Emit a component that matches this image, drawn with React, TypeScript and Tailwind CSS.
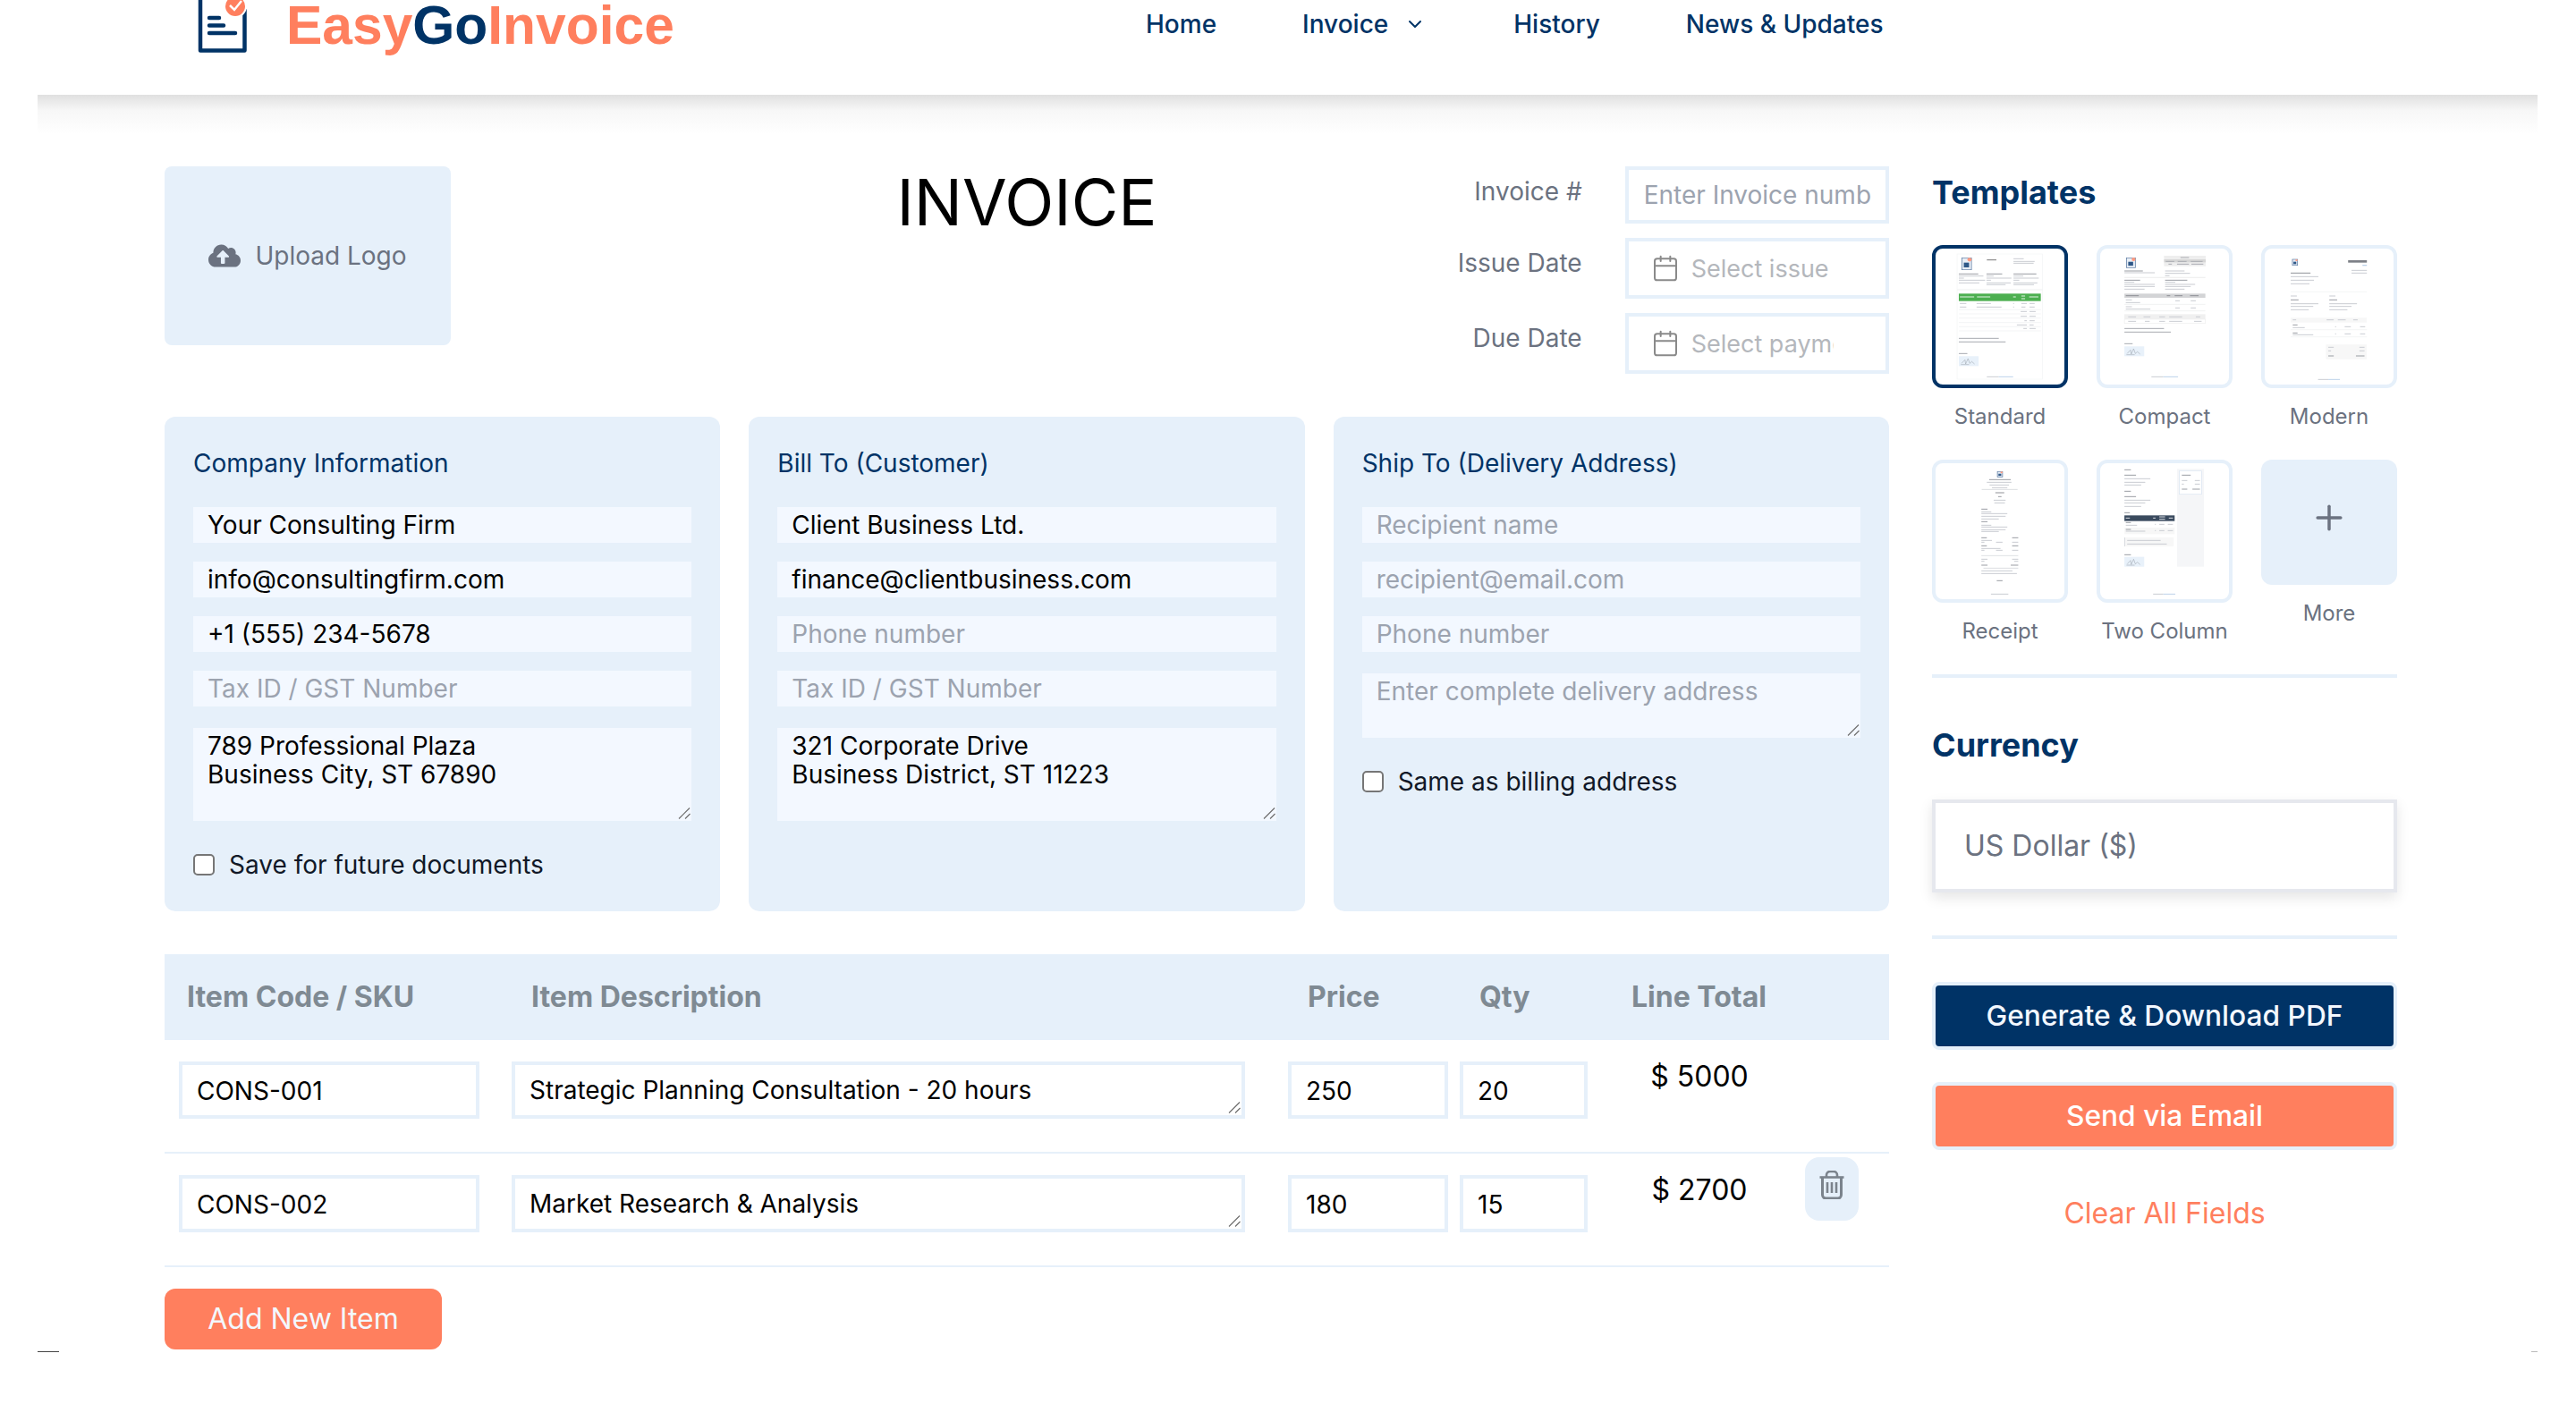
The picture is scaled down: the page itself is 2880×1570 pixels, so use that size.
import { Calendar, ChevronDown, Plus } from 'lucide-react';
import { FaCloudUploadAlt } from 'react-icons/fa';

// [x1, x2, y, colour?] in the thumbnail's own coordinates
type Bar = [number, number, number, string?];

function Bars({ items, color = '#c9ccd2' }: { items: Bar[]; color?: string }) {
  return (
    <>
      {items.map(([a, b, y, c], i) => (
        <rect key={i} x={a} y={y - 1.5} width={b - a} height={3} fill={c || color} />
      ))}
    </>
  );
}

function Signature({ x, y }: { x: number; y: number }) {
  return (
    <g>
      <rect x={x} y={y} width={58} height={33} fill="#e8f1fa" />
      <path
        d={`M${x + 8} ${y + 24} l10 -12 l2 14 l7 -18 l5 16 l6 -6 l8 8 M${x + 6} ${y + 28} h24`}
        fill="none"
        stroke="#9aa1ab"
        strokeWidth={1.5}
      />
    </g>
  );
}

function MiniLogo({ x, y, w, h }: { x: number; y: number; w: number; h: number }) {
  return (
    <g>
      <rect x={x} y={y} width={w} height={h} fill="#e8eef6" stroke="#5d7ca3" strokeWidth={2} />
      <rect x={x + w * 0.2} y={y + h * 0.4} width={w * 0.55} height={h * 0.4} fill="#2f5888" />
      <circle cx={x + w * 0.8} cy={y + h * 0.15} r={w * 0.22} fill="#ff9a80" />
    </g>
  );
}

const stdLines: Bar[] = [
  [265, 293, 92, '#777'], [343, 373, 88], [343, 405, 97], [343, 402, 103],
  [183, 240, 139, '#9a9da3'], [183, 255, 146], [183, 198, 153], [183, 260, 160], [183, 243, 169],
  [264, 310, 139, '#9a9da3'], [264, 285, 146], [264, 337, 153], [264, 277, 160], [264, 335, 169], [264, 320, 175],
  [343, 410, 139, '#9a9da3'], [343, 372, 146], [343, 417, 153], [343, 360, 160], [343, 413, 169], [343, 403, 175],
  [186, 205, 238], [235, 277, 238], [342, 345, 238], [366, 382, 238], [390, 405, 238],
  [186, 205, 250], [235, 308, 250], [342, 345, 250], [366, 378, 250], [390, 405, 250],
  [364, 382, 265], [390, 408, 265], [364, 382, 281], [390, 408, 281], [375, 382, 296], [390, 405, 296],
  [353, 382, 310], [390, 402, 310], [372, 382, 322], [390, 408, 322],
  [183, 300, 355, '#a8abb0'], [183, 320, 367, '#a8abb0'], [183, 208, 406, '#a8abb0'], [265, 300, 484], [300, 342, 484, '#bcd2ea'],
];

const compactLines: Bar[] = [
  [666, 720, 129, '#9a9da3'], [666, 755, 135], [785, 842, 129], [785, 858, 137], [785, 798, 145],
  [666, 712, 160, '#9a9da3'], [666, 695, 167], [666, 755, 174], [666, 755, 181], [666, 725, 190],
  [785, 850, 160, '#9a9da3'], [785, 815, 167], [785, 873, 174], [785, 860, 181], [785, 842, 190],
  [670, 688, 226], [670, 712, 235], [815, 828, 229], [860, 875, 229], [670, 688, 249], [670, 742, 257], [815, 828, 253], [860, 875, 253],
  [677, 700, 283], [722, 742, 283], [768, 785, 283], [797, 835, 283], [875, 888, 283],
  [677, 700, 298], [726, 740, 298], [768, 785, 298], [797, 835, 298], [870, 892, 298],
  [666, 782, 322, '#a8abb0'], [666, 802, 334, '#a8abb0'], [666, 690, 373, '#a8abb0'], [745, 780, 484], [780, 823, 484, '#bcd2ea'],
];

const modernLines: Bar[] = [
  [1330, 1375, 127], [1330, 1375, 136], [1152, 1210, 136, '#8f9298'], [1152, 1233, 148], [1152, 1220, 160], [1152, 1207, 172],
  [1152, 1170, 213], [1265, 1283, 213], [1152, 1175, 226, '#9a9da3'], [1265, 1288, 226, '#9a9da3'],
  [1152, 1233, 239], [1265, 1346, 239], [1152, 1218, 248], [1265, 1330, 248], [1152, 1205, 259], [1265, 1318, 259],
  [1158, 1168, 293], [1257, 1278, 293], [1290, 1313, 293], [1335, 1348, 293],
  [1158, 1172, 310, '#9a9da3'], [1158, 1193, 319], [1282, 1285, 316], [1310, 1328, 316], [1355, 1370, 316],
  [1158, 1172, 337, '#9a9da3'], [1158, 1218, 343], [1282, 1285, 340], [1310, 1328, 340], [1355, 1370, 340],
  [1262, 1278, 385], [1353, 1368, 385], [1262, 1270, 397], [1353, 1368, 397], [1262, 1278, 414, '#9a9da3'], [1343, 1368, 414, '#9a9da3'],
  [1232, 1262, 493], [1262, 1296, 493, '#bcd2ea'],
];

const receiptLines: Bar[] = [
  [272, 335, 829, '#9a9da3'], [265, 337, 838], [273, 330, 847], [280, 325, 856], [250, 355, 862, '#dcdee2'], [290, 316, 873, '#8f9298'],
  [298, 308, 886, '#9a9da3'], [285, 320, 898], [287, 318, 907],
  [249, 267, 928, '#9a9da3'], [249, 278, 937], [249, 325, 943], [249, 320, 952], [249, 300, 961], [249, 267, 970, '#9a9da3'],
  [249, 278, 982], [249, 325, 988], [249, 320, 997], [249, 300, 1003],
  [249, 265, 1024, '#9a9da3'], [339, 357, 1024, '#9a9da3'], [249, 280, 1033], [249, 258, 1039], [292, 311, 1039], [339, 357, 1039],
  [249, 265, 1051, '#9a9da3'], [339, 357, 1051, '#9a9da3'], [249, 305, 1060], [249, 258, 1066], [292, 311, 1066], [339, 357, 1066],
  [249, 357, 1084, '#dfe1e4'], [249, 267, 1096], [339, 357, 1096], [249, 258, 1103], [345, 357, 1103],
  [249, 267, 1116, '#9a9da3'], [335, 357, 1116, '#9a9da3'], [255, 357, 1126, '#dcdee2'], [249, 340, 1135], [249, 353, 1144],
  [294, 311, 1168, '#9a9da3'], [277, 328, 1213],
];

const twoColLines: Bar[] = [
  [666, 685, 796, '#9a9da3'], [666, 700, 814, '#9a9da3'], [666, 742, 826], [666, 727, 838], [666, 715, 847],
  [666, 685, 868, '#9a9da3'], [666, 700, 886, '#9a9da3'], [666, 742, 898], [666, 727, 907], [666, 715, 919], [666, 682, 940, '#9a9da3'],
  [834, 860, 814, '#9a9da3'], [834, 850, 832], [872, 887, 832], [834, 840, 844], [872, 887, 844], [834, 850, 861, '#9a9da3'], [865, 887, 861, '#9a9da3'],
  [670, 685, 973, '#9a9da3'], [670, 703, 982], [755, 758, 979], [768, 783, 979], [793, 808, 979],
  [670, 685, 996, '#9a9da3'], [670, 727, 1002], [755, 758, 1000], [768, 783, 1000], [793, 808, 1000],
  [674, 772, 1033], [674, 790, 1045], [666, 685, 1081, '#9a9da3'], [750, 780, 1213], [780, 815, 1213, '#bcd2ea'],
];

function StandardThumb() {
  return (
    <svg viewBox="115 54 377 456" preserveAspectRatio="none" className="h-full w-full">
      <rect x={178} y={72} width={250} height={420} fill="none" stroke="#f4f5f6" strokeWidth={2} />
      <line x1={178} x2={428} y1={192} y2={192} stroke="#f0f1f2" strokeWidth={3} />
      <MiniLogo x={192} y={85} w={28} h={40} />
      <rect x={183} y={205} width={240} height={25} fill="#4caf50" />
      <Bars items={[[186, 228, 216], [236, 275, 216], [342, 350, 216], [366, 377, 213], [366, 377, 222], [389, 416, 216]]} color="#e4f3e5" />
      {[259, 273, 287, 302, 316, 330].map((y) => (
        <line key={y} x1={183} x2={423} y1={y} y2={y} stroke="#eef0f1" strokeWidth={2} />
      ))}
      <Bars items={stdLines} />
      <Signature x={183} y={415} />
    </svg>
  );
}

function CompactThumb() {
  return (
    <svg viewBox="595 54 377 456" preserveAspectRatio="none" className="h-full w-full">
      <MiniLogo x={672} y={85} w={26} h={33} />
      <rect x={782} y={78} width={122} height={35} fill="#eeeeee" />
      <rect x={782} y={90} width={122} height={10} fill="#d6d6d6" />
      <Bars items={[[830, 855, 84], [787, 812, 97], [822, 848, 97], [860, 895, 97], [795, 805, 106], [820, 855, 106], [862, 897, 106]]} color="#a9acb2" />
      <line x1={666} x2={903} y1={151} y2={151} stroke="#eceded" strokeWidth={3} />
      <rect x={666} y={205} width={237} height={14} fill="#d3d4d6" />
      <Bars items={[[670, 708, 212], [790, 800, 212], [813, 836, 212], [858, 883, 212]]} color="#8c8f95" />
      <line x1={666} x2={903} y1={241} y2={241} stroke="#eceded" strokeWidth={2} />
      <line x1={666} x2={903} y1={263} y2={263} stroke="#eceded" strokeWidth={2} />
      <rect x={666} y={274} width={237} height={17} fill="#f0f0f0" />
      <rect x={666} y={291} width={237} height={14} fill="none" stroke="#efefef" strokeWidth={2} />
      <Bars items={compactLines} />
      <Signature x={666} y={382} />
    </svg>
  );
}

function ModernThumb() {
  return (
    <svg viewBox="1076 54 377 456" preserveAspectRatio="none" className="h-full w-full">
      <MiniLogo x={1157} y={90} w={15} h={20} />
      <rect x={1320} y={93} width={55} height={8} fill="#7d8087" />
      <rect x={1362} y={108} width={13} height={4} fill="#bcd2ea" />
      <line x1={1152} x2={1375} y1={199} y2={199} stroke="#f0f1f2" strokeWidth={2} />
      <rect x={1152} y={286} width={223} height={16} fill="#f7f7f7" />
      <line x1={1152} x2={1375} y1={326} y2={326} stroke="#f0f1f2" strokeWidth={2} />
      <line x1={1152} x2={1375} y1={350} y2={350} stroke="#f0f1f2" strokeWidth={2} />
      <rect x={1255} y={376} width={120} height={49} fill="#f7f7f7" />
      <Bars items={modernLines} />
    </svg>
  );
}

function ReceiptThumb() {
  return (
    <svg viewBox="115 774 377 456" preserveAspectRatio="none" className="h-full w-full">
      <MiniLogo x={296} y={802} w={15} h={18} />
      <Bars items={receiptLines} />
    </svg>
  );
}

function TwoColumnThumb() {
  return (
    <svg viewBox="595 774 377 456" preserveAspectRatio="none" className="h-full w-full">
      <rect x={820} y={793} width={79} height={328} fill="#f5f6f8" />
      <rect x={827} y={800} width={65} height={78} fill="#ffffff" stroke="#dbe6f2" strokeWidth={2} />
      <rect x={666} y={949} width={147} height={19} fill="#3a4a5e" />
      <Bars items={[[670, 682, 958], [750, 757, 958], [768, 785, 954], [768, 785, 962], [796, 808, 958]]} color="#d8dce2" />
      <rect x={666} y={990} width={147} height={22} fill="#f7f7f7" />
      <rect x={666} y={1023} width={144} height={30} fill="#f7f7f7" />
      <rect x={666} y={1023} width={2} height={30} fill="#cfd3d8" />
      <Bars items={twoColLines} />
      <Signature x={666} y={1088} />
    </svg>
  );
}

function Grip({ className }: { className: string }) {
  return (
    <svg viewBox="0 0 14 14" className={`pointer-events-none absolute h-[14px] w-[14px] ${className}`}>
      <path d="M1 13.5 13 1.5M8 13.5 13.5 8" stroke="#6f6f6f" strokeWidth={1.2} fill="none" />
    </svg>
  );
}

function Trash() {
  return (
    <svg viewBox="0 0 28 32" className="h-[32px] w-[28px]" fill="none" stroke="#7b838c" strokeWidth={2.6}>
      <path d="M0.5 7.5H27.5" />
      <path d="M8 7V5a4 4 0 0 1 4-4h4a4 4 0 0 1 4 4v2" />
      <path d="M3.5 7.5V27a4 4 0 0 0 4 4h13a4 4 0 0 0 4-4V7.5" strokeWidth={3} />
      <path d="M9 13V25M14 13V25M19 13V25" />
    </svg>
  );
}

const cardInput =
  'block h-[40px] w-full bg-[#f3f8ff] px-[16px] text-[28px] text-black outline-none placeholder:text-[#9ca3af]';
const cardArea =
  'block w-full resize-none bg-[#f3f8ff] px-[16px] pt-[4px] text-[28px] leading-[32px] text-black outline-none placeholder:text-[#9ca3af]';
const cellInput =
  'block h-[64px] shrink-0 border-4 border-[#e6f0fa] bg-white pr-[16px] pl-[16px] text-[28px] text-black outline-none';

function AddressCard({
  title,
  values,
  placeholders,
  area,
  areaClass,
  check,
}: {
  title: string;
  values: string[];
  placeholders: string[];
  area?: string;
  areaClass: string;
  check?: string;
}) {
  return (
    <div className="h-[553px] rounded-[12px] bg-[#e6f0fa] px-8 pt-[35px]">
      <div className="mb-[32px] text-[28px] leading-[34px] text-[#003366]">{title}</div>
      <div className="flex flex-col gap-[21px]">
        {placeholders.map((p, i) => (
          <input key={p} className={cardInput} placeholder={p} defaultValue={values[i]} />
        ))}
      </div>
      <div className="relative mt-[24px]">
        <textarea className={`${cardArea} ${areaClass}`} defaultValue={area} placeholder="Enter complete delivery address" />
        <Grip className="right-[1px] bottom-[2px]" />
      </div>
      {check && (
        <label className="mt-[37px] flex items-center gap-[16px] text-[28px] leading-[24px] text-[#111827]">
          <input type="checkbox" className="h-6 w-6 appearance-none rounded-[5px] border-2 border-[#767676] bg-white" />
          {check}
        </label>
      )}
    </div>
  );
}

function ItemRow({ code, desc, price, qty, total, trash }: { code: string; desc: string; price: string; qty: string; total: string; trash?: boolean }) {
  return (
    <div className="flex h-[127px] items-start border-b-2 border-[#e6f0fa] pt-[24px] pl-[16px]">
      <input className={`${cellInput} w-[336px] pt-[2px]`} defaultValue={code} />
      <div className="relative ml-[36px] w-[820px] shrink-0">
        <textarea className={`${cellInput} w-full resize-none pt-[12px] leading-[33px]`} defaultValue={desc} />
        <Grip className="right-[5px] bottom-[6px]" />
      </div>
      <input className={`${cellInput} ml-[48px] w-[179px] pt-[2px]`} defaultValue={price} />
      <input className={`${cellInput} ml-[13px] w-[143px] pt-[2px]`} defaultValue={qty} />
      <div className="ml-[15px] w-[220px] shrink-0 text-center text-[32px] leading-[34px] text-black">{total}</div>
      {trash && (
        <button className="ml-[8px] -mt-[20px] flex h-[71px] w-[60px] shrink-0 items-start justify-center rounded-[16px] bg-[#e6f0fa] pt-[15px]">
          <Trash />
        </button>
      )}
    </div>
  );
}

function Thumb({ label, active, children }: { label: string; active?: boolean; children: React.ReactNode }) {
  return (
    <div>
      <div className={`h-[160px] overflow-hidden rounded-[12px] border-4 bg-white ${active ? 'border-[#003366]' : 'border-[#e6f0fa]'}`}>
        {children}
      </div>
      <div className="mt-[16px] text-center text-[24px] leading-[32px] whitespace-nowrap text-[#6b7280]">{label}</div>
    </div>
  );
}

export default function App() {
  return (
    <div className="relative min-h-screen overflow-hidden bg-white font-[Inter,sans-serif]">
      <header className="flex h-[106px] items-start overflow-hidden bg-white pl-[221px]">
        <svg viewBox="0 0 56 60" className="h-[60px] w-[56px] shrink-0">
          <path d="M3 -4V56.5H52.5V10" fill="none" stroke="#003366" strokeWidth={4.5} strokeLinejoin="round" />
          <path d="M13 20H24M13 28.5H29M13 37H42" stroke="#003366" strokeWidth={4.5} strokeLinecap="round" />
          <circle cx={42} cy={7} r={13} fill="#ffffff" />
          <circle cx={42} cy={7} r={11} fill="#ff7f5e" />
          <path d="M36 6l5 5 8-10" fill="none" stroke="#ffffff" strokeWidth={2.5} />
        </svg>
        <div className="ml-[43px] -mt-[6px] w-[437px] shrink-0 whitespace-nowrap font-['Liberation_Sans',sans-serif] text-[60.5px] leading-[69px] font-bold text-[#ff7f5e]">
          Easy<span className="text-[#003366]">Go</span>Invoice
        </div>
        <nav className="mt-[10px] ml-[524px] flex items-center gap-[96px] text-[28px] leading-[34px] font-medium text-[#003366]">
          <span>Home</span>
          <span className="flex items-center">
            Invoice
            <ChevronDown className="mr-[2px] ml-[18px] h-[24px] w-[24px]" strokeWidth={2} />
          </span>
          <span>History</span>
          <span>News &amp; Updates</span>
        </nav>
      </header>
      <div className="mr-[43px] ml-[42px] h-[44px] bg-gradient-to-b from-[#e0e0e0] via-[#f7f7f7] via-40% to-white" />

      <main className="flex gap-[48px] pt-[36px] pr-[200px] pl-[184px]">
        <div className="min-w-0 flex-1">
          <section className="grid h-[232px] grid-cols-3 gap-x-8">
            <div className="flex h-[200px] w-[320px] items-center justify-center gap-[16px] rounded-[8px] bg-[#e6f0fa] text-[28px] text-[#6b7280]">
              <FaCloudUploadAlt size={36} />
              Upload Logo
            </div>
            <h1 className="text-center text-[72px] leading-[79px] font-normal text-black">INVOICE</h1>
            <div className="flex flex-col">
              <div className="flex items-start">
                <label className="mt-[10px] w-[278px] text-right text-[28px] leading-[36px] text-[#6b7280]">Invoice #</label>
                <input
                  className="ml-[48px] h-[64px] w-[295px] shrink-0 border-4 border-[#e6f0fa] bg-white pr-[16px] pl-[17px] text-[28px] outline-none placeholder:text-[#9ca3af]"
                  placeholder="Enter Invoice number"
                />
              </div>
              <div className="mt-[16px] flex items-start">
                <label className="mt-[10px] w-[278px] text-right text-[28px] leading-[36px] text-[#6b7280]">Issue Date</label>
                <div className="ml-[48px] flex h-[68px] w-[295px] shrink-0 items-center border-4 border-[#e6f0fa] bg-white pl-[25px]">
                  <Calendar className="h-[32px] w-[32px] shrink-0 text-[#8a8a8a]" strokeWidth={1.5} />
                  <input className="mt-[2px] ml-[13px] w-[159px] bg-white text-[27px] outline-none placeholder:text-[#b4b7bc]" placeholder="Select issue date" />
                </div>
              </div>
              <div className="mt-[16px] flex items-start">
                <label className="mt-[10px] w-[278px] text-right text-[28px] leading-[36px] text-[#6b7280]">Due Date</label>
                <div className="ml-[48px] flex h-[68px] w-[295px] shrink-0 items-center border-4 border-[#e6f0fa] bg-white pl-[25px]">
                  <Calendar className="h-[32px] w-[32px] shrink-0 text-[#8a8a8a]" strokeWidth={1.5} />
                  <input className="mt-[2px] ml-[13px] w-[159px] bg-white text-[27px] outline-none placeholder:text-[#b4b7bc]" placeholder="Select payment date" />
                </div>
              </div>
            </div>
          </section>

          <section className="mt-[48px] grid grid-cols-3 gap-x-8">
            <AddressCard
              title="Company Information"
              values={['Your Consulting Firm', 'info@consultingfirm.com', '+1 (555) 234-5678']}
              placeholders={['Company name', 'Company email', 'Company phone', 'Tax ID / GST Number']}
              area={'789 Professional Plaza\nBusiness City, ST 67890'}
              areaClass="h-[104px]"
              check="Save for future documents"
            />
            <AddressCard
              title="Bill To (Customer)"
              values={['Client Business Ltd.', 'finance@clientbusiness.com']}
              placeholders={['Client name', 'Client email', 'Phone number', 'Tax ID / GST Number']}
              area={'321 Corporate Drive\nBusiness District, ST 11223'}
              areaClass="h-[104px]"
            />
            <AddressCard
              title="Ship To (Delivery Address)"
              values={[]}
              placeholders={['Recipient name', 'recipient@email.com', 'Phone number']}
              areaClass="h-[72px]"
              check="Same as billing address"
            />
          </section>

          <section className="mt-[48px]">
            <div className="flex h-[96px] items-center bg-[#e6f0fa] text-[32px] font-bold text-[#7f8a93]">
              <span className="ml-[25px] w-[385px]">Item Code / SKU</span>
              <span className="w-[868px]">Item Description</span>
              <span className="w-[192px]">Price</span>
              <span className="w-[170px]">Qty</span>
              <span>Line Total</span>
            </div>
            <ItemRow code="CONS-001" desc="Strategic Planning Consultation - 20 hours" price="250" qty="20" total="$ 5000" />
            <ItemRow code="CONS-002" desc="Market Research & Analysis" price="180" qty="15" total="$ 2700" trash />
            <button className="mt-[24px] h-[68px] w-[310px] rounded-[12px] bg-[#ff7f5e] text-[32px] text-[#f3f8ff]">Add New Item</button>
          </section>
        </div>

        <aside className="w-[520px] shrink-0">
          <h2 className="mt-[6px] mb-[36px] text-[36px] leading-[46px] font-bold text-[#003366]">Templates</h2>
          <div className="grid grid-cols-3 gap-x-8 gap-y-8">
            <Thumb label="Standard" active>
              <StandardThumb />
            </Thumb>
            <Thumb label="Compact">
              <CompactThumb />
            </Thumb>
            <Thumb label="Modern">
              <ModernThumb />
            </Thumb>
            <Thumb label="Receipt">
              <ReceiptThumb />
            </Thumb>
            <Thumb label="Two Column">
              <TwoColumnThumb />
            </Thumb>
            <div>
              <div className="flex h-[140px] items-center justify-center rounded-[12px] bg-[#e6f0fa] pb-[10px] text-[#6b7280]">
                <Plus className="h-[44px] w-[44px]" strokeWidth={1.9} />
              </div>
              <div className="mt-[16px] text-center text-[24px] leading-[32px] text-[#6b7280]">More</div>
            </div>
          </div>
          <div className="mt-[32px] h-[4px] bg-[#e6f0fa]" />
          <h2 className="mt-[52px] mb-[38px] text-[36px] leading-[46px] font-bold text-[#003366]">Currency</h2>
          <select className="block h-[104px] w-full appearance-none border-4 border-[#e6e8ee] bg-white pl-[32px] text-[32px] text-[#6b7280] shadow-[0_6px_14px_rgba(0,0,0,0.1)] outline-none">
            <option>US Dollar ($)</option>
          </select>
          <div className="mt-[48px] h-[4px] bg-[#e6f0fa]" />
          <button className="mt-[48px] h-[76px] w-full rounded-[8px] border-4 border-[#e6f0fa] bg-[#003366] text-[31.7px] font-medium text-[#f3f8ff]">
            Generate &amp; Download PDF
          </button>
          <button className="mt-[36px] h-[76px] w-full rounded-[8px] border-4 border-[#e6f0fa] bg-[#ff7f5e] text-[31.7px] font-medium text-white">
            Send via Email
          </button>
          <button className="mt-[51px] h-[40px] w-full text-center text-[32px] leading-[40px] text-[#ff7f5e]">Clear All Fields</button>
        </aside>
      </main>

      {/* stray corner marks at the bottom of the capture */}
      <div className="absolute top-[1511px] left-[42px] h-[1px] w-[24px] bg-[#444]" />
      <div className="absolute top-[1511px] left-[2830px] h-[1px] w-[7px] bg-[#bbb]" />
    </div>
  );
}
